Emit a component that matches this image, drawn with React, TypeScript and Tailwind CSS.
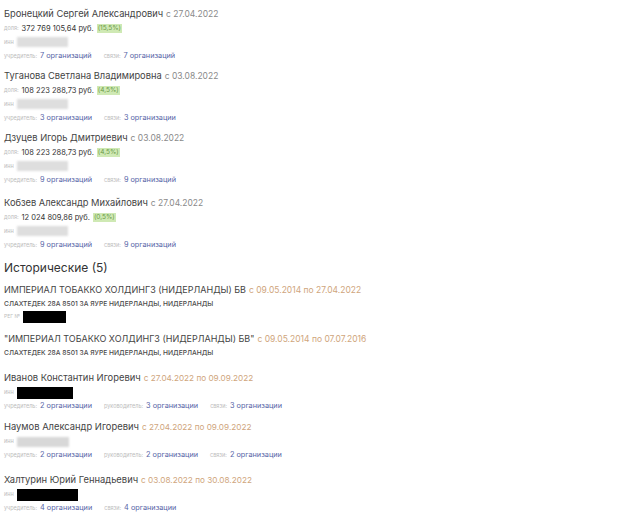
const current = [
  { name: "Бронецкий Сергей Александрович", since: "с 27.04.2022", share: "372 769 105,64 руб.", pct: "(15,5%)", orgs: "7 организаций", links: "7 организаций", gap: "pt-[6px]" },
  { name: "Туганова Светлана Владимировна", since: "с 03.08.2022", share: "108 223 288,73 руб.", pct: "(4,5%)", orgs: "3 организации", links: "3 организации", gap: "pt-[5px]" },
  { name: "Дзуцев Игорь Дмитриевич", since: "с 03.08.2022", share: "108 223 288,73 руб.", pct: "(4,5%)", orgs: "9 организаций", links: "9 организаций", gap: "pt-[5px]" },
  { name: "Кобзев Александр Михайлович", since: "с 27.04.2022", share: "12 024 809,86 руб.", pct: "(0,5%)", orgs: "9 организаций", links: "9 организаций", gap: "pt-[8px]" },
];

const companies = [
  { name: "ИМПЕРИАЛ ТОБАККО ХОЛДИНГЗ (НИДЕРЛАНДЫ) БВ", dates: "с 09.05.2014 по 27.04.2022", reg: true, gap: "pt-[3px]" },
  { name: "\"ИМПЕРИАЛ ТОБАККО ХОЛДИНГЗ (НИДЕРЛАНДЫ) БВ\"", dates: "с 09.05.2014 по 07.07.2016", reg: false, gap: "pt-[8px]" },
];

const people = [
  { name: "Иванов Константин Игоревич", dates: "с 27.04.2022 по 09.09.2022", dark: true, w: "w-[56px]", orgs: "2 организации", head: "3 организации", links: "3 организации", gap: "pt-[10px]" },
  { name: "Наумов Александр Игоревич", dates: "с 27.04.2022 по 09.09.2022", dark: false, w: "w-[52px]", orgs: "2 организации", head: "2 организации", links: "2 организации", gap: "pt-[6px]" },
  { name: "Халтурин Юрий Геннадьевич", dates: "с 03.08.2022 по 30.08.2022", dark: true, w: "w-[61px]", orgs: "4 организации", head: "", links: "4 организации", gap: "pt-[10px]" },
];

function Label({ children }: { children: React.ReactNode }) {
  return <span className="mr-[3px] text-[5.5px] text-[#bcbcbc]">{children}</span>;
}

function LinkRow({ orgs, head, links }: { orgs: string; head?: string; links: string }) {
  return (
    <div className="flex h-[14px] items-center gap-[12px] text-[7.3px]">
      <span>
        <Label>учредитель:</Label>
        <span className="text-[#5563a6]">{orgs}</span>
      </span>
      {head && (
        <span>
          <Label>руководитель:</Label>
          <span className="text-[#5563a6]">{head}</span>
        </span>
      )}
      <span>
        <Label>связи:</Label>
        <span className="text-[#5563a6]">{links}</span>
      </span>
    </div>
  );
}

export default function App() {
  return (
    <main className="flex min-h-screen w-[620px] flex-col bg-white pl-[4px] font-['Inter',sans-serif] text-[#444]">
      {current.map((p) => (
        <div key={p.name} className={`flex flex-col ${p.gap}`}>
          <div className="flex h-[16px] items-center gap-[3px]">
            <span className="text-[9.3px]">{p.name}</span>
            <span className="text-[8.5px] text-[#8a8a8a]">{p.since}</span>
          </div>
          <div className="flex h-[13px] items-center">
            <Label>доля:</Label>
            <span className="text-[7.5px] text-[#333]">{p.share}</span>
            <span className="ml-[3px] bg-[#cfe9b4] px-[1px] text-[6.5px] text-[#6b9a47]">{p.pct}</span>
          </div>
          <div className="flex h-[14px] items-center">
            <Label>инн</Label>
            <span className="h-[10px] w-[51px] bg-[#dedede] blur-[1px]" />
          </div>
          <LinkRow orgs={p.orgs} links={p.links} />
        </div>
      ))}

      <h2 className="mt-[5px] flex h-[22px] items-center text-[12px] text-[#333]">Исторические (5)</h2>

      {companies.map((c) => (
        <div key={c.name} className={`flex flex-col ${c.gap}`}>
          <div className="flex h-[16px] items-center gap-[3px]">
            <span className="text-[9px] text-[#444]">{c.name}</span>
            <span className="text-[8.5px] text-[#cfa57c]">{c.dates}</span>
          </div>
          <div className="flex h-[13px] items-center text-[6.7px] font-medium text-[#4a4a4a]">
            СЛАХТЕДЕК 28А 8501 ЗА ЯУРЕ НИДЕРЛАНДЫ, НИДЕРЛАНДЫ
          </div>
          {c.reg && (
            <div className="flex h-[12px] items-center">
              <span className="mr-[3px] text-[5px] text-[#bcbcbc]">РЕГ №</span>
              <span className="h-[12px] w-[43px] bg-black" />
            </div>
          )}
        </div>
      ))}

      {people.map((p) => (
        <div key={p.name} className={`flex flex-col ${p.gap}`}>
          <div className="flex h-[16px] items-center gap-[3px]">
            <span className="text-[9.4px]">{p.name}</span>
            <span className="text-[8.2px] text-[#cfa57c]">{p.dates}</span>
          </div>
          <div className="flex h-[13px] items-center">
            <Label>инн</Label>
            {p.dark ? (
              <span className={`h-[12px] ${p.w} bg-black`} />
            ) : (
              <span className="h-[10px] w-[52px] bg-[#d8d8d8] blur-[1px]" />
            )}
          </div>
          <LinkRow orgs={p.orgs} head={p.head} links={p.links} />
        </div>
      ))}
    </main>
  );
}
